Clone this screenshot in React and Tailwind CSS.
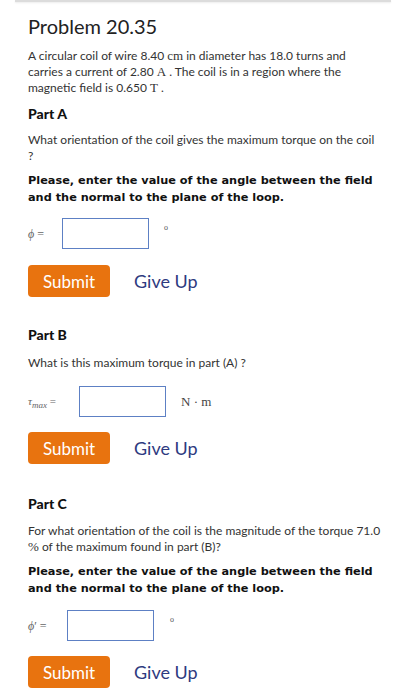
import React from 'react';

const body = { fontFamily: 'Lato, "Open Sans", sans-serif' };
const heavy = { fontFamily: '"DejaVu Sans", Lato, sans-serif' };
const math = { fontFamily: '"Liberation Serif", "DejaVu Serif", serif' };

const Buttons = ({ className = '' }) => (
  <div className={`flex items-center ${className}`}>
    <button
      className="w-[82px] h-[32px] rounded-[4px] bg-[#e8730f] text-white text-[17px] leading-none"
      style={body}
    >
      Submit
    </button>
    <button className="ml-[24px] text-[#2e3a80] text-[18px] leading-none" style={body}>
      Give Up
    </button>
  </div>
);

const AngleNote = ({ className = '' }) => (
  <p className={`text-[11.3px] leading-[17px] font-bold text-[#111] ${className}`} style={heavy}>
    Please, enter the value of the angle between the field
    <br />
    and the normal to the plane of the loop.
  </p>
);

const Box = ({ className = '' }) => (
  <div className={`h-[31px] w-[87px] border border-[#5d80c4] bg-white ${className}`} />
);

export default function App() {
  return (
    <div className="min-h-[700px] bg-white text-[#333]" style={body}>
      <div className="mx-[15px] h-[2px] bg-[#dcdcdc] shadow-[0_1px_2px_rgba(0,0,0,0.08)]" />

      <div className="pl-[28px] pr-[20px]">
        <h1 className="mt-[13px] text-[20px] leading-[22px] text-[#222]">Problem 20.35</h1>

        <p className="mt-[11px] text-[12px] leading-[16px]">
          A circular coil of wire 8.40 <span style={math} className="text-[13px]">cm</span> in diameter has 18.0 turns and
          <br />
          carries a current of 2.80 <span style={math} className="text-[13px]">A</span> . The coil is in a region where the
          <br />
          magnetic field is 0.650 <span style={math} className="text-[13px]">T</span> .
        </p>

        {/* Part A */}
        <h2 className="mt-[10px] text-[14px] leading-[16px] font-black text-[#111]">Part A</h2>
        <p className="mt-[10px] text-[12px] leading-[16px]">
          What orientation of the coil gives the maximum torque on the coil
          <br />?
        </p>
        <AngleNote className="mt-[8px]" />
        <div className="mt-[12px] flex items-center">
          <span className="w-[34px] text-[12px] text-[#666]" style={math}>
            <i>ϕ</i> =
          </span>
          <Box />
          <span className="ml-[15px] -mt-[12px] text-[8px] text-[#555]" style={math}>o</span>
        </div>
        <Buttons className="mt-[16px]" />

        {/* Part B */}
        <h2 className="mt-[30px] text-[14px] leading-[16px] font-black text-[#111]">Part B</h2>
        <p className="mt-[12px] text-[12px] leading-[16px]">What is this maximum torque in part (A) ?</p>
        <div className="mt-[15px] flex items-center">
          <span className="w-[51px] text-[11px] text-[#666]" style={math}>
            <i>τ<sub className="text-[9px]">max</sub></i> =
          </span>
          <Box />
          <span className="ml-[15px] text-[13px] text-[#444]" style={math}>N · m</span>
        </div>
        <Buttons className="mt-[15px]" />

        {/* Part C */}
        <h2 className="mt-[32px] text-[14px] leading-[16px] font-black text-[#111]">Part C</h2>
        <p className="mt-[11px] text-[12px] leading-[16px]">
          For what orientation of the coil is the magnitude of the torque 71.0
          <br />
          <span style={math} className="text-[13px]">%</span> of the maximum found in part (B)?
        </p>
        <AngleNote className="mt-[8px]" />
        <div className="mt-[13px] flex items-center">
          <span className="w-[39px] text-[12px] text-[#666]" style={math}>
            <i>ϕ</i>′ =
          </span>
          <Box className="w-[86px]" />
          <span className="ml-[16px] -mt-[12px] text-[8px] text-[#555]" style={math}>o</span>
        </div>
        <Buttons className="mt-[15px]" />
      </div>
    </div>
  );
}
